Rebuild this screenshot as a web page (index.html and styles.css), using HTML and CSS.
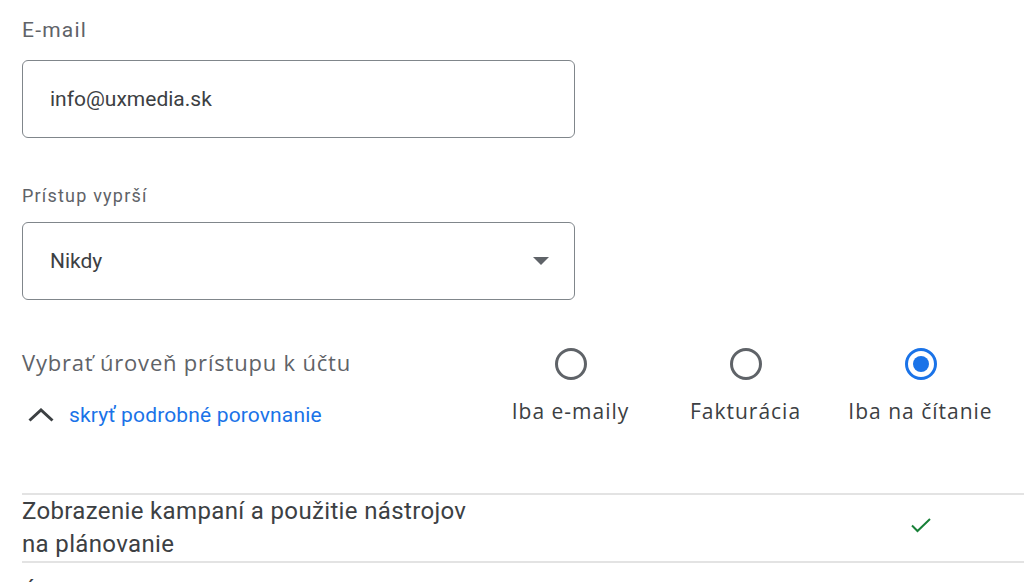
FILE: index.html
```html
<!DOCTYPE html>
<html lang="sk">
<head>
<meta charset="utf-8">
<link rel="stylesheet" href="styles.css">
</head>
<body>
<div class="page">
  <div class="field">
    <div class="label">E-mail</div>
    <div class="box"><span class="value">info@uxmedia.sk</span></div>
  </div>
  <div class="field field-expire">
    <div class="label label-small">Prístup vyprší</div>
    <div class="box select">
      <span class="value">Nikdy</span>
      <svg class="caret" width="16" height="8" viewBox="0 0 16 8"><path d="M0 0h16L8 8z" fill="#5f6368"/></svg>
    </div>
  </div>
  <div class="access">
    <div class="access-left">
      <div class="access-title">Vybrať úroveň prístupu k účtu</div>
      <div class="toggle">
        <svg class="chev" width="26" height="14" viewBox="0 0 26 14"><path d="M1.5 12.5L13 2l11.5 10.5" fill="none" stroke="#3c4043" stroke-width="3"/></svg>
        <span class="link">skryť podrobné porovnanie</span>
      </div>
    </div>
    <div class="options">
      <div class="option">
        <span class="radio"></span>
        <span class="opt-label">Iba e-maily</span>
      </div>
      <div class="option">
        <span class="radio"></span>
        <span class="opt-label">Fakturácia</span>
      </div>
      <div class="option">
        <span class="radio checked"></span>
        <span class="opt-label">Iba na čítanie</span>
      </div>
    </div>
  </div>
  <div class="table">
    <div class="row">
      <div class="row-text">Zobrazenie kampaní a použitie nástrojov<br>na plánovanie</div>
      <div class="cell"></div>
      <div class="cell"></div>
      <div class="cell">
        <svg width="22" height="16" viewBox="0 0 22 16"><path d="M2 8.5l5.5 5.5L20 2" fill="none" stroke="#188038" stroke-width="2"/></svg>
      </div>
    </div>
    <div class="row row-next">
      <div class="row-text">Úprava kampaní</div>
    </div>
  </div>
</div>
</body>
</html>
```
FILE: styles.css
```css
html, body {
  margin: 0;
  padding: 0;
  background: #fff;
}
body {
  width: 1024px;
  height: 582px;
  overflow: hidden;
  font-family: Roboto, "Liberation Sans", sans-serif;
  color: #3c4043;
}
.page {
  padding: 18px 0 0 22px;
}
.label {
  font-size: 21px;
  line-height: 24px;
  letter-spacing: 1.2px;
  color: #5f6368;
  margin-bottom: 18px;
}
.label-small {
  font-size: 18px;
  letter-spacing: 1.2px;
  margin-bottom: 14px;
}
.field-expire {
  margin-top: 46px;
}
.box {
  box-sizing: border-box;
  width: 553px;
  height: 78px;
  border: 1.5px solid #80868b;
  border-radius: 6px;
  display: flex;
  align-items: center;
  padding: 0 25px 0 27px;
}
.value {
  font-size: 21px;
  color: #3c4043;
  flex: 1;
}
.caret {
  display: block;
}
.access {
  display: flex;
  margin-top: 48px;
}
.access-left {
  width: 461px;
}
.access-title {
  font-family: "Open Sans", sans-serif;
  font-size: 22px;
  line-height: 28px;
  letter-spacing: 0.8px;
  color: #5f6368;
  font-weight: 500;
}
.toggle {
  display: flex;
  align-items: center;
  margin-top: 27px;
  padding-left: 6px;
}
.chev {
  display: block;
  margin-right: 15px;
}
.link {
  font-size: 21px;
  letter-spacing: 0.15px;
  color: #1a73e8;
}
.options {
  display: grid;
  grid-template-columns: repeat(3, 175px);
}
.option {
  display: flex;
  flex-direction: column;
  align-items: center;
}
.radio {
  box-sizing: border-box;
  width: 32px;
  height: 32px;
  border: 3px solid #5f6368;
  border-radius: 50%;
  display: flex;
  align-items: center;
  justify-content: center;
}
.radio.checked {
  border-color: #1a73e8;
}
.radio.checked::after {
  content: "";
  width: 16px;
  height: 16px;
  border-radius: 50%;
  background: #1a73e8;
}
.opt-label {
  font-family: "Open Sans", sans-serif;
  font-size: 21px;
  line-height: 28px;
  letter-spacing: 1px;
  margin-top: 17px;
  color: #3c4043;
  font-weight: 500;
}
.table {
  margin-top: 66px;
}
.row {
  display: grid;
  grid-template-columns: 461px 175px 175px 175px;
  border-top: 2px solid #e3e3e3;
}
.row-next {
  padding-top: 14px;
}
.row-text {
  font-size: 24px;
  line-height: 33px;
  letter-spacing: 0.35px;
  color: #3c4043;
}
.cell {
  display: flex;
  align-items: center;
  justify-content: center;
  padding-bottom: 6px;
}
```
